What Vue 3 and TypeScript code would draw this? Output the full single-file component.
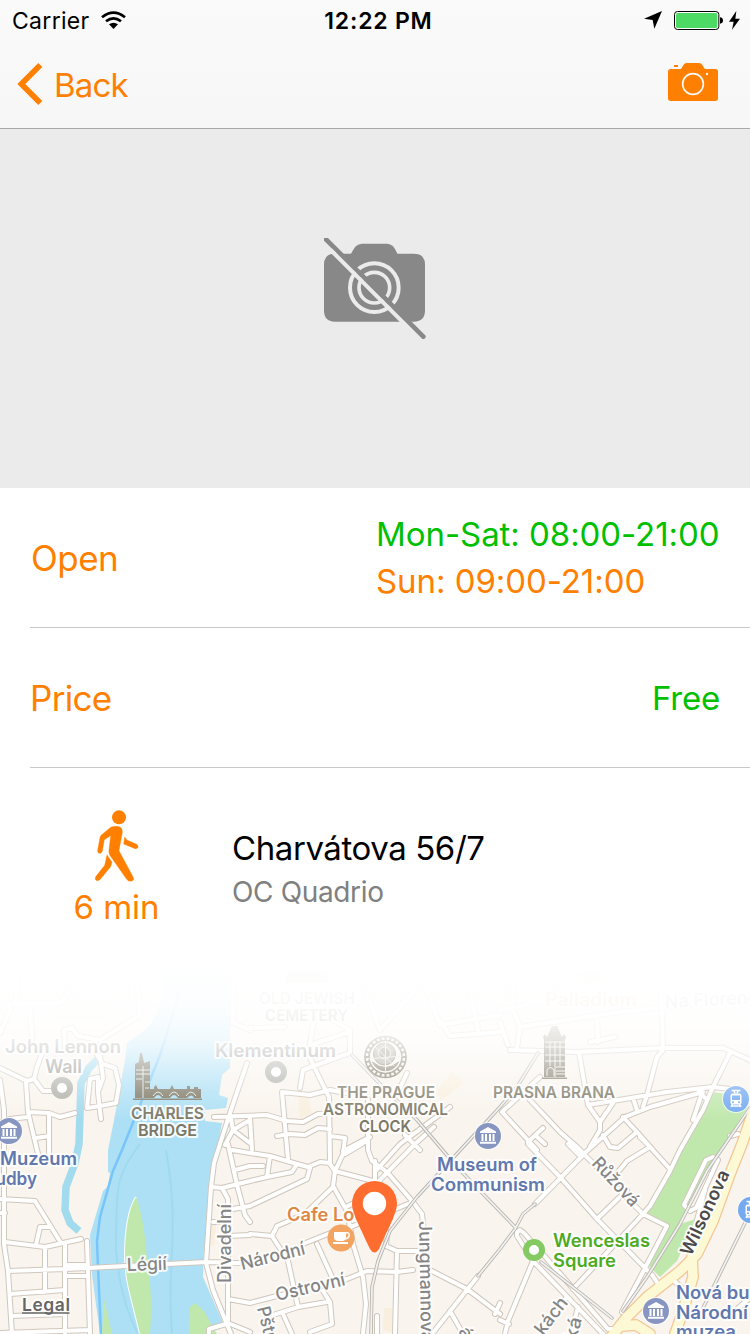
<script setup lang="ts">
interface Label {
  text: string
  x: number
  y: number
  w: number
  kind: string
  rot?: number
}

const hours = [
  { text: 'Mon-Sat: 08:00-21:00', cls: 'green' },
  { text: 'Sun: 09:00-21:00', cls: 'orange' },
]

const roads: string = [
  // left bank
  'M0 1068 27 1081 34 1079 43 1091 55 1091', 'M34 1079 37 1067 41 1056 45 1045', 'M26 1082 28 1112 38 1154',
  'M28 1112 49 1113 60 1117 75 1113', 'M49 1113 49 1154', 'M36 1138 49 1136', 'M0 1123 10 1119 27 1117', 'M0 1080 4 1110',
  'M97 1055 103 1064 115 1068 119 1085 116 1103 100 1106 87 1108 90 1079 98 1077 98 1092 103 1078 100 1056', 'M98 1092 100 1111 101 1119',
  'M0 1033 10 1010 8 1004 60 1003 75 985', 'M30 1003 32 1040', 'M65 1048 64 1030 72 1028 78 1036 100 1040 140 1015 137 980', 'M16 1000 18 975',
  'M4 1110 4 1244 8 1271 12 1334', 'M0 1199 35 1201 61 1243', 'M81 1239 45 1247 5 1242', 'M0 1213 5 1213', 'M36 1245 40 1227 50 1227',
  'M45 1247 45 1292', 'M65 1243 65 1334', 'M87 1241 90 1334', 'M8 1271 65 1269 88 1268 126 1266 207 1262 250 1263',
  'M65 1265 88 1265', 'M65 1276 88 1276', 'M10 1294 65 1290', 'M12 1316 65 1314', 'M0 1333 90 1330',
  // right bank
  'M247 1063 230 1113 220 1144 214 1163 211 1187 206 1263 213 1290 226 1322 231 1334', 'M211 1187 222 1188 250 1181 267 1177 292 1172 297 1164',
  'M222 1188 228 1199 228 1322', 'M228 1144 237 1185 245 1215 250 1222', 'M232 1150 250 1153 270 1156 297 1164 308 1167 320 1162 330 1163', 'M235 1170 250 1166 263 1166',
  'M233 1209 250 1206 307 1179 310 1168', 'M213 1222 228 1222', 'M228 1236 250 1235', 'M226 1324 209 1329 209 1334', 'M228 1299 250 1303 273 1297 347 1279 367 1271 397 1272 413 1270',
  'M228 1323 250 1332', 'M214 1117 267 1115 287 1121 303 1122 318 1114 335 1113', 'M230 1113 233 1130 250 1120', 'M225 1145 233 1130 250 1143', 'M250 1118 252 1150', 'M233 980 233 1023 250 1030',
  'M350 1053 303 1070 300 1088', 'M345 1093 330 1090 310 1095 282 1092 288 1159', 'M310 1058 322 1083 329 1097 330 1164 335 1171 373 1181',
  'M277 1136 290 1134 305 1135 318 1128 330 1129', 'M330 1136 345 1138 343 1154 335 1171', 'M350 1053 350 1030 325 1015 318 990', 'M310 1045 350 1032',
  'M345 1154 362 1144 370 1137', 'M343 1151 368 1138', 'M270 1156 267 1177', 'M335 1171 333 1186 347 1211 353 1244 363 1277 366 1304 363 1334',
  'M333 1187 305 1214 277 1226 272 1236 250 1234', 'M272 1236 288 1261 298 1307', 'M303 1244 333 1232 353 1226 413 1202',
  'M317 1244 332 1277', 'M323 1291 330 1302 332 1324 310 1332', 'M327 1302 298 1307 267 1317', 'M283 1314 292 1334', 'M346 1207 360 1200',
  'M368 1100 368 1150 372 1161 387 1172 413 1202 422 1214 426 1251 426 1334', 'M375 1161 375 1181', 'M375 1172 400 1144 450 1107', 'M377 1183 415 1144 434 1127', 'M405 1135 420 1150', 'M407 1073 400 1088',
  'M387 1232 386 1246 397 1251 420 1251', 'M397 1251 395 1334', 'M377 1316 377 1334', 'M432 1271 467 1289 500 1314', 'M478 1276 432 1334', 'M450 1311 463 1334', 'M495 1314 500 1303',
  'M365 990 380 1030 415 990', 'M425 985 440 1025 500 1015', 'M440 1020 450 1036 500 1032', 'M470 990 478 1030', 'M250 1028 285 1027', 'M318 990 310 1045',
  // new town
  'M510 1050 577 1052 663 1048 723 1048 750 1060', 'M661 980 663 1050 657 1057 647 1095 643 1107', 'M579 1052 588 1105 600 1122 600 1130 590 1147',
  'M588 1105 637 1097 667 1092 713 1087 730 1089', 'M600 1122 613 1103', 'M633 1098 637 1110', 'M625 1117 650 1107 703 1092', 'M730 1053 713 1087 703 1110 680 1150 670 1171 650 1206 643 1214',
  'M699 1091 706 1099', 'M693 1120 701 1096', 'M502 1112 540 1077', 'M502 1112 537 1150', 'M530 1100 560 1132 577 1147', 'M528 1142 543 1128', 'M535 1135 545 1144',
  'M603 1135 610 1147 618 1148 637 1132', 'M623 1117 637 1132 653 1150', 'M625 1117 587 1151 535 1204', 'M513 985 513 1010 520 1027 517 1048', 'M500 1010 527 1005', 'M520 1027 620 1012 750 998',
  'M597 1015 598 1042', 'M590 1042 615 1037', 'M500 1022 508 1045', 'M545 1005 555 990', 'M528 1144 560 1177 597 1219 653 1276 658 1284', 'M577 1147 643 1214 667 1226 622 1312', 'M568 1144 580 1156',
  'M643 1214 573 1289', 'M597 1219 627 1190', 'M618 1172 627 1161 650 1147 670 1169', 'M640 1137 650 1147', 'M524 1233 570 1285 608 1329 622 1329', 'M517 1232 517 1236 533 1261 603 1334', 'M517 1232 520 1230 524 1233',
  'M533 1261 508 1321 505 1334', 'M500 1320 509 1324', 'M567 1297 545 1325', 'M578 1307 574 1322', 'M670 1277 684 1290', 'M713 1157 706 1160 684 1205 690 1211 696 1208 718 1160Z', 'M742 1150 730 1174',
  'M750 1298 738 1308', 'M705 1190 697 1220', 'M730 1136 738 1134',
].join('')

const rails: string =
  'M352 1055 383 1087 417 1120 457 1167 515 1227' +
  'M538 1053 517 1087 500 1107 417 1197 390 1231 378 1261 372 1287 371 1334' +
  'M535 1204 523 1214 515 1229 500 1249 478 1276' +
  'M750 1108 735 1130 707 1171 680 1224 647 1277 623 1311' +
  'M746 1221 700 1314' +
  'M541 1262 612 1318'

const highway: string =
  'M753 1112 742 1144 730 1174 713 1221 697 1254 680 1271 647 1297 627 1317 612 1336' +
  'M704 1226 692 1257 693 1277 683 1311 675 1334' +
  'M622 1326 636 1325 650 1334'

const labels: Label[] = [
  { text: 'OLD JEWISH', x: 259, y: 1004, w: 96, kind: 'mark' },
  { text: 'CEMETERY', x: 265, y: 1021, w: 83, kind: 'mark' },
  { text: 'Palladium', x: 545, y: 1006, w: 92, kind: 'food' },
  { text: 'Na Florenci', x: 665, y: 1008, w: 98, kind: 'road', rot: -3 },
  { text: 'Klementinum', x: 215, y: 1056.5, w: 121, kind: 'gray' },
  { text: 'John Lennon', x: 5, y: 1053, w: 116, kind: 'gray' },
  { text: 'Wall', x: 45, y: 1073, w: 37, kind: 'gray' },
  { text: 'THE PRAGUE', x: 337, y: 1098, w: 98, kind: 'mark' },
  { text: 'ASTRONOMICAL', x: 323, y: 1115, w: 125, kind: 'mark' },
  { text: 'CLOCK', x: 359, y: 1132, w: 52, kind: 'mark' },
  { text: 'CHARLES', x: 131, y: 1119, w: 73, kind: 'mark' },
  { text: 'BRIDGE', x: 138, y: 1136, w: 59, kind: 'mark' },
  { text: 'PRASNA BRANA', x: 493, y: 1098, w: 122, kind: 'mark' },
  { text: 'Muzeum', x: 0, y: 1165, w: 77, kind: 'museum' },
  { text: 'hudby', x: -15, y: 1185, w: 52, kind: 'museum' },
  { text: 'Museum of', x: 437, y: 1171, w: 100, kind: 'museum' },
  { text: 'Communism', x: 431, y: 1191, w: 114, kind: 'museum' },
  { text: 'Cafe Louvre', x: 287, y: 1220.5, w: 107, kind: 'food' },
  { text: 'Wenceslas', x: 553, y: 1247, w: 97, kind: 'park' },
  { text: 'Square', x: 553, y: 1267, w: 63, kind: 'park' },
  { text: 'Nová budova', x: 676, y: 1299, w: 117, kind: 'museum' },
  { text: 'Národní', x: 676, y: 1319, w: 72, kind: 'museum' },
  { text: 'muzea', x: 676, y: 1338, w: 60, kind: 'museum' },
  { text: 'Légií', x: 127, y: 1271, w: 40, kind: 'road', rot: -2 },
  { text: 'Divadelní', x: 230.5, y: 1283, w: 79, kind: 'road', rot: -90 },
  { text: 'Národní', x: 242, y: 1270, w: 66, kind: 'road', rot: -14 },
  { text: 'Ostrovní', x: 277, y: 1301, w: 71, kind: 'road', rot: -13 },
  { text: 'Jungmannova', x: 419, y: 1221, w: 121, kind: 'road', rot: 89 },
  { text: 'Pštrossova', x: 257, y: 1308, w: 92, kind: 'road', rot: 76 },
  { text: 'Růžová', x: 591, y: 1164, w: 60, kind: 'road', rot: 47 },
  { text: 'kách', x: 543, y: 1336, w: 42, kind: 'road', rot: -52 },
  { text: 'ká', x: 576, y: 1341, w: 23, kind: 'road', rot: -75 },
  { text: 'á', x: 458, y: 1331, w: 11, kind: 'road', rot: 60 },
  { text: 'Wilsonova', x: 691, y: 1257, w: 92, kind: 'major', rot: -65 },
]

const museums = [[9, 1131], [488, 1136], [656, 1311]]
const stations = [[736, 1099], [751, 1210]]
const spin = (l: Label): string | undefined => (l.rot ? `rotate(${l.rot} ${l.x} ${l.y})` : undefined)
const ticks: number[] = Array.from({ length: 24 }, (_, i) => i * 15)
</script>

<template>
  <div class="screen">
    <header class="bar">
      <div class="status">
        <div class="side">
          <span class="carrier">Carrier</span>
          <svg class="wifi" width="25" height="19" viewBox="0 0 75 57">
            <g fill="none" stroke="#000" stroke-width="8">
              <path d="M3 19Q37.500-9 72 19" />
              <path d="M15 31Q37.500 13 60 31" />
            </g>
            <path d="M24 40Q37.500 30 51 40L37.500 54Z" />
          </svg>
        </div>
        <span class="clock">12:22 PM</span>
        <div class="side right">
          <svg class="arrow" width="18" height="18" viewBox="0 0 54 54"><path d="M54 0 0 23 26 27 31 53Z" /></svg>
          <svg class="battery" width="50" height="19" viewBox="0 0 150 57">
            <rect x="1.500" y="1.500" width="133" height="54" rx="9" fill="#fff" stroke="#000" stroke-width="3" />
            <rect x="6" y="6" width="124" height="45" rx="5" fill="#4cd964" />
            <path d="M138 19q9 1 9 9.500t-9 9.500z" />
          </svg>
          <svg class="bolt" width="11" height="19" viewBox="0 0 33 57"><path d="M22 0 0 32 14 32 9 56 33 23 19 23Z" /></svg>
        </div>
      </div>
      <div class="nav">
        <div class="back">
          <svg width="26" height="42" viewBox="0 0 78 126"><path d="M70 6 13 63l57 57" fill="none" stroke="#ff8000" stroke-width="17" /></svg>
          <span class="back-text">Back</span>
        </div>
        <svg class="camera" width="50" height="38" viewBox="0 0 150 114">
          <path fill="#ff8000" d="M8 18H38C44 16 44 0 57 0H92C106 0 105 16 112 18H142Q150 18 150 26V106Q150 114 142 114H8Q0 114 0 106V26Q0 18 8 18Z" />
          <rect x="18" y="6" width="12" height="6" fill="#ff8000" />
          <circle cx="75" cy="63" r="31" fill="none" stroke="#fafafa" stroke-width="5" />
          <circle cx="117" cy="33" r="3.500" fill="#fafafa" />
        </svg>
      </div>
    </header>

    <section class="photo">
      <svg width="102" height="101" viewBox="72 53 306 303">
        <path fill="#888" d="M104 100H152C160 96 160 70 190 70H257C287 70 286 96 294 100H342Q375 100 375 133V270Q375 304 342 304H104Q72 304 72 270V133Q72 100 104 100Z" />
        <g fill="none" stroke="#ebebeb">
          <circle cx="223" cy="202" r="73" stroke-width="12" />
          <circle cx="223" cy="202" r="46" stroke-width="11" />
        </g>
        <path d="M76 55 370 349" stroke="#888" stroke-width="14" stroke-linecap="round" />
        <path d="M92 89 312 309" stroke="#ebebeb" stroke-width="12" />
      </svg>
    </section>

    <section class="row">
      <span class="key open">Open</span>
      <div class="hours">
        <span v-for="h in hours" :key="h.text" :class="h.cls">{{ h.text }}</span>
      </div>
    </section>
    <section class="row">
      <span class="key price">Price</span>
      <span class="green free">Free</span>
    </section>
    <section class="place">
      <div class="walk">
        <svg width="44" height="72" viewBox="284 58 132 216">
          <g fill="#ff8000" stroke="#ff8000" stroke-linejoin="round">
            <circle cx="356" cy="80" r="21" stroke="none" />
            <path d="M331 110Q340 105 352 107Q368 110 366 126L356 180 398 258Q404 268 394 271Q385 274 379 266L328 193Q324 185 326 176L331 135 312 147 306 182Q303 190 297 188Q290 187 292 178L299 140Q300 135 304 132Z" stroke-width="1" />
            <path d="M320 192 335 215 331 228 300 266Q293 273 287 269Q282 264 287 257L313 224Z" stroke-width="1" />
            <path d="M373 139 380 148 409 161Q415 165 413 170Q411 175 404 174L370 160Z" stroke-width="1" />
          </g>
        </svg>
        <span class="minutes">6 min</span>
      </div>
      <div class="address">
        <span class="street">Charvátova 56/7</span>
        <span class="mall">OC Quadrio</span>
      </div>
    </section>

    <svg class="map" width="750" height="374" viewBox="0 960 750 374">
      <defs>
        <linearGradient id="fade" x1="0" y1="960" x2="0" y2="1120" gradientUnits="userSpaceOnUse">
          <stop offset="0" stop-color="#fff" />
          <stop offset=".15" stop-color="#fff" stop-opacity=".98" />
          <stop offset=".3" stop-color="#fff" stop-opacity=".95" />
          <stop offset=".42" stop-color="#fff" stop-opacity=".88" />
          <stop offset=".5" stop-color="#fff" stop-opacity=".81" />
          <stop offset=".56" stop-color="#fff" stop-opacity=".72" />
          <stop offset=".66" stop-color="#fff" stop-opacity=".54" />
          <stop offset=".83" stop-color="#fff" stop-opacity=".24" />
          <stop offset="1" stop-color="#fff" stop-opacity="0" />
        </linearGradient>
        <symbol id="museum" viewBox="-13 -13 26 26">
          <circle r="13" fill="#8795c1" />
          <path fill="#fff" d="M-8-4.500 0-9 8-4.500V-3H-8ZM-6.500-2h2v7h-2ZM-3-2h2v7h-2ZM1-2h2v7h-2ZM4.500-2h2v7h-2ZM-8 5.700H8V7.700H-8Z" />
        </symbol>
        <symbol id="tram" viewBox="-13 -13 26 26">
          <circle r="13" fill="#75aaf0" />
          <path d="M-4.500-8.500h9M-2-8-1-5.500M2-8 1-5.500M-3.500 5-5 8M3.500 5 5 8M-4 7h8" stroke="#fff" stroke-width="1.500" fill="none" />
          <rect x="-5.500" y="-5.500" width="11" height="11" rx="2" fill="#fff" />
          <rect x="-4" y="-3.500" width="8" height="4.500" fill="#75aaf0" />
          <circle cx="-3" cy="3.200" r="1" fill="#75aaf0" /><circle cx="3" cy="3.200" r="1" fill="#75aaf0" />
        </symbol>
      </defs>

      <rect y="960" width="750" height="374" fill="#f9f4ed" />
      <path fill="#f9efde" d="M437 1090 452 1072 464 1083 440 1101ZM298 1097 308 1095 312 1113 300 1118ZM384 1308 392 1308 392 1332 383 1330ZM210 1222 216 1225 214 1246 209 1246Z" />
      <path fill="#ecf3df" d="M75 990 128 982 100 1022 55 1018Z" />
      <path fill="#ade0f5" d="M166 960 164 990Q158 1018 145 1030L127 1043 125 1060 115 1115 108 1150 108 1172 110 1173 108 1186 103 1191 90 1235 92 1275 100 1334H209L209 1329 224 1325 213 1300 203 1277 204 1250 211 1187 217 1150 222 1123 205 1121 205 1110 226 1108 228 1098 219 1095 222 1075 230 1068 230 1035 233 960Z" />
      <path d="M100 1057 89 1068 81 1083 79 1144 75 1163 66 1187 65 1210 70 1223 79 1231" fill="none" stroke="#a2daee" stroke-width="7.500" />
      <path d="M140 1144Q120 1170 118 1190T116 1250Q120 1300 138 1334M166 1150Q175 1200 172 1250T172 1334" fill="none" stroke="#9ad7ee" stroke-width="2" opacity=".7" />
      <path d="M182 985 160 1055 122 1150 113 1171 100 1217 97 1241 98 1267 101 1334" fill="none" stroke="#78c5fb" stroke-width="2.500" />
      <path d="M136 1197C128 1210 125 1232 125 1258C126 1285 132 1298 140 1334" fill="none" stroke="#fff" stroke-width="2" />
      <path fill="#c0e8ad" d="M136 1197C128 1210 125 1232 125 1258C126 1285 132 1298 140 1334H150C152 1310 151 1280 147 1260C146 1235 140 1205 136 1197ZM104 1299 112 1334H102ZM195 1303 190 1307 189 1334H217L204 1311ZM713 1092 733 1095 748 1107 720 1150 680 1224 696 1219 677 1261 660 1277 647 1264 667 1226 643 1214 670 1171Z" />

      <g fill="none" stroke-linejoin="round" stroke-linecap="round">
        <path :d="roads" stroke="#d0c7bd" stroke-width="6" />
        <path :d="highway" stroke="#f3c796" stroke-width="12" />
        <path :d="roads" stroke="#fff" stroke-width="4" />
        <path :d="rails" stroke="#b4b3b0" stroke-width="3.500" />
        <path :d="rails" stroke="#f3f1ed" stroke-width="1.800" />
        <path :d="highway" stroke="#fef9d5" stroke-width="9.500" />
      </g>

      <g fill="#7d7866">
        <path d="M135 1070V1064L139 1062 140 1053 142 1053 144 1063 150 1061V1098H135ZM150 1089H201V1098H194Q192 1093 187 1098H178Q174 1092 170 1098H162Q158 1092 154 1098H150ZM154 1089V1087L156 1085 158 1089ZM170 1089 172 1085 174 1089ZM187 1089V1086H190V1089ZM194 1089V1087H198V1089ZM133 1098.500H202V1100H133Z" />
        <path d="M136 1070H150M136 1074H150M136 1079H142M143 1066V1098M145 1082H150M145 1088H149M153 1096Q158 1088 163 1096M169 1096Q174 1088 179 1096M186 1096Q191 1088 196 1096" fill="none" stroke="#e5f5f8" stroke-width=".9" />
        <path d="M544 1077V1040L543 1037 545 1034 547 1037 552 1026H557L562 1037 564 1034 566 1037 565 1040V1077ZM542 1077.500H567V1079H542Z" />
        <path d="M545 1042H565M545 1047H565M545 1055H565M545 1061H565M550 1042V1066M555 1042V1077M560 1042V1066M547 1076V1070Q550 1065 554 1070V1076M556 1067H565M556 1071H565M556 1074H565" fill="none" stroke="#f6f3ec" stroke-width="1" />
        <path d="M285 982 289 971H326L329 982Z" />
      </g>
      <path fill="#df8744" opacity=".5" d="M578 972H604Q600 983 591 983Q583 983 578 972Z" />
      <g transform="translate(385.500 1057)" fill="none" stroke="#7d7866">
        <circle r="20.500" stroke-width="1.600" /><circle r="16.500" stroke-width="1.600" />
        <path v-for="t in ticks" :key="t" d="M0-21V-16" stroke-width="2" :transform="`rotate(${t})`" />
        <path d="M-13 5A14 14 0 0 0 13 5Q0 16-13 5Z" fill="#7d7866" />
        <circle cx="-1" cy="-3" r="11" fill="#aaa595" /><circle cx="-1" cy="-4" r="6" fill="#918c7b" stroke="#eeeae0" />
        <path d="M-19 2 17-1M0-15V16M-10-10 9 9" stroke="#eeeae0" />
      </g>

      <g fill="#fff" stroke="#b0b0aa" stroke-width="6">
        <circle cx="62" cy="1088" r="8" /><circle cx="276" cy="1072" r="8" />
      </g>
      <circle cx="534" cy="1250" r="8" fill="#fff" stroke="#84ca61" stroke-width="6" />
      <g v-for="m in museums" :key="m[0]">
        <circle :cx="m[0]" :cy="m[1]" r="14" fill="#fff" opacity=".7" />
        <use href="#museum" :x="m[0] - 13" :y="m[1] - 13" width="26" height="26" />
      </g>
      <g v-for="s in stations" :key="s[1]">
        <circle :cx="s[0]" :cy="s[1]" r="14" fill="#fff" opacity=".7" />
        <use href="#tram" :x="s[0] - 13" :y="s[1] - 13" width="26" height="26" />
      </g>
      <g transform="translate(341 1238)">
        <circle r="13.500" fill="#f4a461" />
        <path fill="#fff" d="M-7-6H5V-1Q5 3 1 3H-3Q-7 3-7-1ZM-8 4H7V6H-8Z" />
        <path d="M5-5Q9-6 8-2Q7 1 3 1" fill="none" stroke="#fff" stroke-width="1.500" />
      </g>

      <text
        v-for="(l, i) in labels" :key="i" :class="['label', l.kind]" :x="l.x" :y="l.y"
        :textLength="l.w" lengthAdjust="spacingAndGlyphs" :transform="spin(l)"
      >{{ l.text }}</text>

      <rect y="960" width="750" height="162" fill="url(#fade)" />
      <text class="label legal" x="22" y="1311" textLength="48">Legal</text>
      <path d="M22 1313H69.500" stroke="#666" stroke-width="1.500" />
      <path fill="#ff6c2f" d="M352 1203.500a22.500 22.500 0 0 1 45 0C397 1212 391 1223 379 1249Q374.500 1256 370 1249C358 1223 352 1212 352 1203.500Z" />
      <circle cx="374.500" cy="1203.500" r="11.700" fill="#fff" />
    </svg>
  </div>
</template>

<style>
body {
  margin: 0;
  background: #fff;
}
</style>

<style scoped>
.screen {
  width: 750px;
  height: 1334px;
  overflow: hidden;
  background: #fff;
  font-family: Inter, "Liberation Sans", sans-serif;
  display: flex;
  flex-direction: column;
  white-space: nowrap;
}
.bar {
  box-sizing: border-box;
  height: 129px;
  flex: none;
  background: linear-gradient(#fafafa, #f7f7f7);
  border-bottom: 1px solid #a8a8a8;
}
.status {
  height: 40px;
  display: grid;
  grid-template-columns: 1fr auto 1fr;
  align-items: center;
  padding: 0 10px 0 12px;
  font-size: 23px;
}
.side {
  display: flex;
  align-items: center;
}
.right {
  justify-content: flex-end;
}
.carrier {
  letter-spacing: 0.3px;
  margin-right: 11px;
  padding-top: 2px;
}
.clock {
  font-weight: 600;
  letter-spacing: 0.8px;
  padding: 2px 0 0 5px;
}
.arrow {
  margin-right: 12px;
}
.bolt {
  margin-left: 5px;
}
.nav {
  height: 88px;
  box-sizing: border-box;
  display: flex;
  justify-content: space-between;
  align-items: flex-start;
  padding: 23px 32px 0 17px;
}
.back {
  display: flex;
  align-items: center;
  gap: 11px;
  color: #ff8000;
  font-size: 33px;
}
.back-text {
  letter-spacing: -0.8px;
  padding-top: 1px;
}
.photo {
  height: 359px;
  flex: none;
  display: flex;
  justify-content: center;
  align-items: flex-start;
  padding-top: 109px;
  box-sizing: border-box;
  background: #ebebeb;
}
.row {
  height: 140px;
  flex: none;
  box-sizing: border-box;
  margin-left: 30px;
  padding-right: 30px;
  border-bottom: 1px solid #c8c7cc;
  display: flex;
  justify-content: space-between;
  align-items: center;
  font-size: 33px;
}
.key {
  font-size: 35px;
  color: #ff8000;
}
.open {
  letter-spacing: -0.5px;
  padding-left: 1px;
}
.price {
  letter-spacing: -0.7px;
}
.free {
  letter-spacing: -0.2px;
}
.hours {
  display: flex;
  flex-direction: column;
  width: 344px;
  line-height: 47px;
  letter-spacing: -0.06px;
}
.green {
  color: #00c000;
}
.orange {
  color: #ff8000;
}
.place {
  height: 192px;
  flex: none;
  display: flex;
}
.walk {
  width: 232px;
  display: flex;
  flex-direction: column;
  align-items: center;
  padding: 42px 0 0 1px;
  box-sizing: border-box;
}
.minutes {
  color: #ff8000;
  font-size: 33px;
  line-height: 50px;
}
.address {
  display: flex;
  flex-direction: column;
  padding-top: 57px;
}
.street {
  font-size: 33px;
  line-height: 46px;
  letter-spacing: -0.42px;
}
.mall {
  font-size: 28px;
  line-height: 42px;
  letter-spacing: -0.35px;
  color: #808080;
}
.map {
  display: block;
  flex: none;
}
.label {
  font-size: 18px;
  font-weight: 600;
  paint-order: stroke;
  stroke: #fff;
  stroke-opacity: 0.85;
  stroke-width: 4px;
  stroke-linejoin: round;
}
.mark {
  font-size: 16px;
  fill: #7d7866;
}
.gray {
  fill: #969693;
}
.museum {
  fill: #6178ae;
}
.food {
  fill: #df8744;
}
.park {
  fill: #4cab22;
}
.road {
  font-weight: 500;
  fill: #858585;
}
.major {
  fill: #4a4a4a;
}
.legal {
  font-size: 17.5px;
  fill: #666;
}
</style>
